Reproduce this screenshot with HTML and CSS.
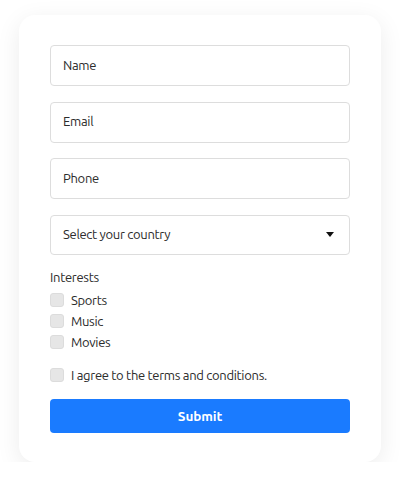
FILE: index.html
```html
<!DOCTYPE html>
<html lang="en">
<head>
    <meta charset="UTF-8">
    <meta name="viewport" content="width=device-width, initial-scale=1.0">
    <title>Form</title>
    <link rel="stylesheet" href="styles.css">
</head>
<body>
    <form class="card">
        <input class="field" type="text" placeholder="Name">
        <input class="field" type="email" placeholder="Email">
        <input class="field" type="tel" placeholder="Phone">
        <div class="select">
            <span>Select your country</span>
            <span class="arrow"></span>
        </div>
        <div class="label">Interests</div>
        <div class="checks">
            <label class="check"><span class="box"></span>Sports</label>
            <label class="check"><span class="box"></span>Music</label>
            <label class="check"><span class="box"></span>Movies</label>
        </div>
        <label class="check agree"><span class="box"></span>I agree to the terms and conditions.</label>
        <button class="submit" type="button">Submit</button>
    </form>
</body>
</html>
```

FILE: styles.css
```css
body{
    margin: 0;
    background-color: #fff;
    font-family: "Ubuntu", "Open Sans", "Noto Sans", sans-serif;
    color: #2b2b2b;
    letter-spacing: -0.3px;
}
.card{
    width: 362px;
    box-sizing: border-box;
    margin: 15px auto 0;
    padding: 30px 31px 29px;
    background-color: #fff;
    border-radius: 16px;
    box-shadow: 0 6px 24px rgba(0,0,0,0.08);
    display: flex;
    flex-direction: column;
}
.field, .select{
    height: 41px;
    box-sizing: border-box;
    border: 1px solid #ddd;
    border-radius: 4px;
    padding: 0 12px 2px;
    font-family: inherit;
    font-size: 13px;
    letter-spacing: -0.3px;
    margin-bottom: 15.5px;
    outline: none;
}
.field::placeholder{
    color: #2b2b2b;
}
.select{
    height: 40px;
    display: flex;
    align-items: center;
    justify-content: space-between;
    margin-bottom: 13px;
    padding-right: 15px;
}
.arrow{
    width: 0;
    height: 0;
    margin-top: 2px;
    border-left: 4px solid transparent;
    border-right: 4px solid transparent;
    border-top: 5px solid #111;
}
.label{
    font-size: 13px;
    line-height: 18px;
    margin-bottom: 7px;
}
.checks{
    display: flex;
    flex-direction: column;
    gap: 7px;
    margin-bottom: 19px;
}
.check{
    display: flex;
    align-items: center;
    font-size: 13px;
    line-height: 14px;
    height: 14px;
}
.box{
    width: 14px;
    height: 14px;
    box-sizing: border-box;
    background-color: #e6e6e6;
    border: 1px solid #dcdcdc;
    border-radius: 3px;
    margin-right: 7px;
}
.agree{
    margin-bottom: 17px;
}
.submit{
    height: 34px;
    border: none;
    border-radius: 4px;
    background-color: #1a7bff;
    color: #fff;
    font-family: inherit;
    font-size: 13.5px;
    font-weight: bold;
    letter-spacing: -0.1px;
}
```
